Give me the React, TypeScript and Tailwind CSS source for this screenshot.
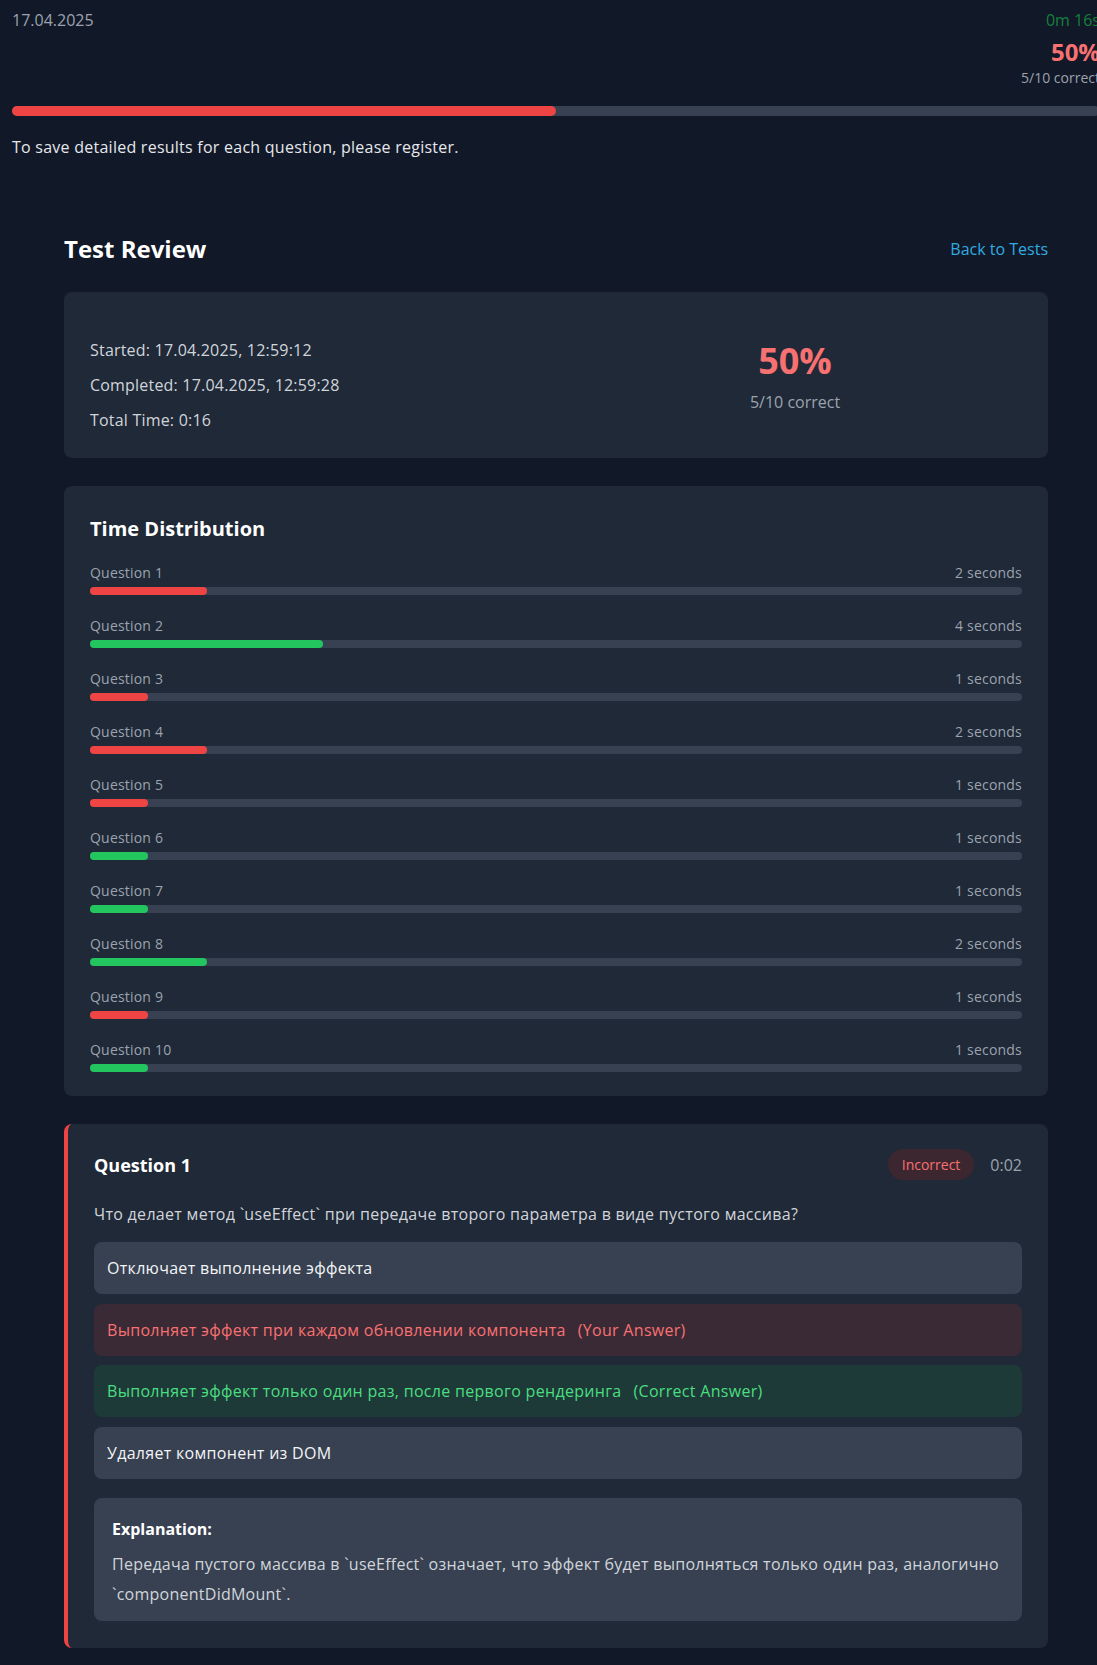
import React from 'react';

type Row = { label: string; seconds: number; correct: boolean };

const timing: Row[] = [
    { label: 'Question 1', seconds: 2, correct: false },
    { label: 'Question 2', seconds: 4, correct: true },
    { label: 'Question 3', seconds: 1, correct: false },
    { label: 'Question 4', seconds: 2, correct: false },
    { label: 'Question 5', seconds: 1, correct: false },
    { label: 'Question 6', seconds: 1, correct: true },
    { label: 'Question 7', seconds: 1, correct: true },
    { label: 'Question 8', seconds: 2, correct: true },
    { label: 'Question 9', seconds: 1, correct: false },
    { label: 'Question 10', seconds: 1, correct: true },
];

const TOTAL = 16;

type Option = { text: string; kind: 'plain' | 'yours' | 'correct' };

const options: Option[] = [
    { text: 'Отключает выполнение эффекта', kind: 'plain' },
    { text: 'Выполняет эффект при каждом обновлении компонента', kind: 'yours' },
    { text: 'Выполняет эффект только один раз, после первого рендеринга', kind: 'correct' },
    { text: 'Удаляет компонент из DOM', kind: 'plain' },
];

const OptionRow: React.FC<{ option: Option }> = ({ option }) => {
    if (option.kind === 'yours') {
        return (
            <div className="rounded-lg bg-[#3a2a36] px-[13px] py-[14px] leading-6 tracking-[0.3px] text-[#f87171]">
                {option.text}
                <span className="ml-3">(Your Answer)</span>
            </div>
        );
    }
    if (option.kind === 'correct') {
        return (
            <div className="rounded-lg bg-[#1e3a38] px-[13px] py-[14px] leading-6 tracking-[0.3px] text-[#4ade80]">
                {option.text}
                <span className="ml-3">(Correct Answer)</span>
            </div>
        );
    }
    return (
        <div className="rounded-lg bg-[#374151] px-[13px] py-[14px] leading-6 tracking-[0.3px] text-[#f3f4f6]">
            {option.text}
        </div>
    );
};

export default function App() {
    return (
        <div className="min-h-screen w-full overflow-hidden bg-[#111827] font-['Segoe_UI','Open_Sans',sans-serif] text-white">
            <div className="w-[1112px] px-3 pt-2">
                {/* top progress header */}
                <div className="flex items-start justify-between">
                    <div className="leading-6 text-[#9ca3af]">17.04.2025</div>
                    <div className="text-right">
                        <div className="leading-6 text-[#15803d]">0m 16s</div>
                        <div className="mt-1 text-2xl leading-8 font-bold text-[#f87171]">50%</div>
                        <div className="text-sm leading-5 text-[#9ca3af]">5/10 correct</div>
                    </div>
                </div>
                <div className="mt-[18px] h-2.5 w-full rounded-full bg-[#374151]">
                    <div className="h-2.5 w-1/2 rounded-full bg-[#ef4444]" />
                </div>
                <p className="mt-[19px] leading-6 tracking-[0.25px] text-[#e5e7eb]">
                    To save detailed results for each question, please register.
                </p>

                <div className="mx-auto mt-[74px] max-w-5xl px-5 pb-5">
                    <div className="mb-[27px] flex h-8 items-center justify-between">
                        <h1 className="text-2xl font-bold">Test Review</h1>
                        <a className="leading-6 text-[#33abe0]">Back to Tests</a>
                    </div>

                    {/* summary */}
                    <div className="mb-7 grid grid-cols-2 items-start gap-6 rounded-lg bg-[#1f2937] px-[26px] pt-[45px] pb-6">
                        <div className="flex flex-col gap-2 tracking-[0.2px] text-[#d1d5db]">
                            <div className="leading-[27px]">Started: 17.04.2025, 12:59:12</div>
                            <div className="leading-[27px]">Completed: 17.04.2025, 12:59:28</div>
                            <div className="leading-[27px]">Total Time: 0:16</div>
                        </div>
                        <div className="pt-1 text-center">
                            <div className="text-4xl leading-10 font-bold text-[#f87171]">50%</div>
                            <div className="mt-[9px] leading-6 text-[#9ca3af]">5/10 correct</div>
                        </div>
                    </div>

                    {/* time distribution */}
                    <div className="mb-7 rounded-lg bg-[#1f2937] px-[26px] pt-[29px] pb-6">
                        <h2 className="mb-5 text-xl leading-7 font-bold">Time Distribution</h2>
                        <div className="flex flex-col gap-[21px]">
                            {timing.map((row) => (
                                <div key={row.label}>
                                    <div className="mb-1 flex justify-between text-sm leading-5 tracking-[0.2px] text-[#9ca3af]">
                                        <span>{row.label}</span>
                                        <span>{row.seconds} seconds</span>
                                    </div>
                                    <div className="h-2 w-full rounded-full bg-[#374151]">
                                        <div
                                            className={row.correct ? 'h-2 rounded-full bg-[#22c55e]' : 'h-2 rounded-full bg-[#ef4444]'}
                                            style={{ width: `${(row.seconds / TOTAL) * 100}%` }}
                                        />
                                    </div>
                                </div>
                            ))}
                        </div>
                    </div>

                    {/* question review */}
                    <div className="rounded-lg border-l-4 border-[#ef4444] bg-[#1f2937] px-[26px] pt-[25px] pb-[27px]">
                        <div className="flex h-[31px] items-center justify-between">
                            <h3 className="text-lg font-bold">Question 1</h3>
                            <div className="flex items-center gap-4">
                                <span className="flex h-[31px] items-center rounded-full bg-[#3c2630] px-3.5 text-sm text-[#f87171]">
                                    Incorrect
                                </span>
                                <span className="leading-6 text-[#9ca3af]">0:02</span>
                            </div>
                        </div>
                        <p className="mt-[22px] mb-4 leading-6 tracking-[0.3px] text-[#d1d5db]">
                            Что делает метод `useEffect` при передаче второго параметра в виде пустого массива?
                        </p>
                        <div className="flex flex-col gap-[9.5px]">
                            {options.map((o) => (
                                <OptionRow key={o.text} option={o} />
                            ))}
                        </div>
                        <div className="mt-[19px] rounded-lg bg-[#374151] px-[18px] pt-[19px] pb-3">
                            <h4 className="mb-2 leading-6 font-bold text-white">Explanation:</h4>
                            <p className="leading-[30px] tracking-[0.25px] text-[#d1d5db]">
                                Передача пустого массива в `useEffect` означает, что эффект будет выполняться только один раз, аналогично
                                <br />
                                `componentDidMount`.
                            </p>
                        </div>
                    </div>
                </div>
            </div>
        </div>
    );
}
